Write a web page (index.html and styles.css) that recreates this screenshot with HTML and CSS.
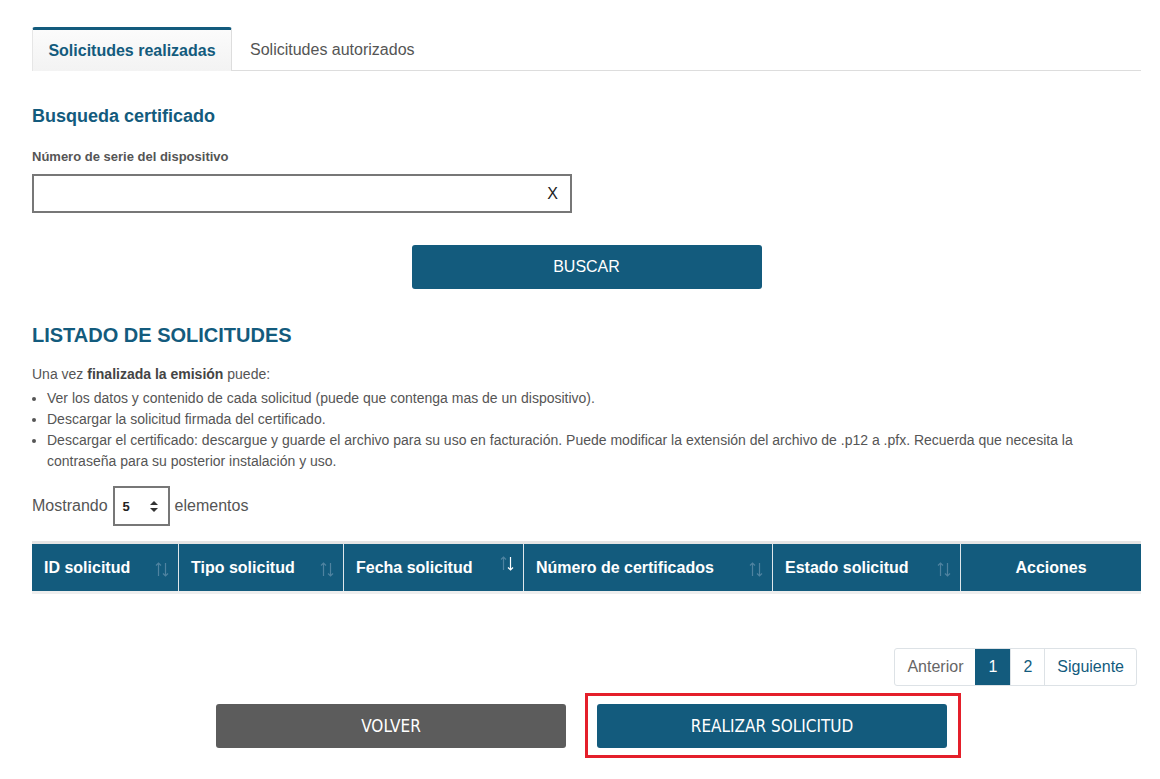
FILE: index.html
```html
<!DOCTYPE html>
<html lang="es">
<head>
<meta charset="utf-8">
<link rel="stylesheet" href="styles.css">
</head>
<body>
<div class="page">
  <div class="tabs">
    <div class="tab active">Solicitudes realizadas</div>
    <div class="tab">Solicitudes autorizados</div>
  </div>

  <h2 class="section-title">Busqueda certificado</h2>
  <label class="field-label">Número de serie del dispositivo</label>
  <div class="input-box"><span class="clear">X</span></div>

  <div class="center-row"><button class="btn btn-primary btn-search">BUSCAR</button></div>

  <h1 class="list-title">LISTADO DE SOLICITUDES</h1>
  <p class="intro">Una vez <b>finalizada la emisión</b> puede:</p>
  <ul class="info-list">
    <li>Ver los datos y contenido de cada solicitud (puede que contenga mas de un dispositivo).</li>
    <li>Descargar la solicitud firmada del certificado.</li>
    <li>Descargar el certificado: descargue y guarde el archivo para su uso en facturación. Puede modificar la extensión del archivo de .p12 a .pfx. Recuerda que necesita la contraseña para su posterior instalación y uso.</li>
  </ul>

  <div class="showing">
    <span>Mostrando</span>
    <div class="select"><span>5</span>
      <svg width="8" height="11" viewBox="0 0 8 11"><path d="M4 0 L8 4 H0 Z M0 7 H8 L4 11 Z" fill="#333"/></svg>
    </div>
    <span>elementos</span>
  </div>

  <div class="table">
    <div class="th c1">ID solicitud<svg class="sort" width="14" height="15" viewBox="0 0 14 15"><path class="up" d="M3.5 1 V14 M1 3.5 L3.5 1 L6 3.5"/><path class="dn" d="M10.5 1 V14 M8 11.5 L10.5 14 L13 11.5"/></svg></div>
    <div class="th c2">Tipo solicitud<svg class="sort" width="14" height="15" viewBox="0 0 14 15"><path class="up" d="M3.5 1 V14 M1 3.5 L3.5 1 L6 3.5"/><path class="dn" d="M10.5 1 V14 M8 11.5 L10.5 14 L13 11.5"/></svg></div>
    <div class="th c3">Fecha solicitud<svg class="sort sort-top" width="14" height="15" viewBox="0 0 14 15"><path class="up" d="M3.5 1 V14 M1 3.5 L3.5 1 L6 3.5"/><path class="dn on" d="M10.5 1 V14 M8 11.5 L10.5 14 L13 11.5"/></svg></div>
    <div class="th c4">Número de certificados<svg class="sort" width="14" height="15" viewBox="0 0 14 15"><path class="up" d="M3.5 1 V14 M1 3.5 L3.5 1 L6 3.5"/><path class="dn" d="M10.5 1 V14 M8 11.5 L10.5 14 L13 11.5"/></svg></div>
    <div class="th c5">Estado solicitud<svg class="sort" width="14" height="15" viewBox="0 0 14 15"><path class="up" d="M3.5 1 V14 M1 3.5 L3.5 1 L6 3.5"/><path class="dn" d="M10.5 1 V14 M8 11.5 L10.5 14 L13 11.5"/></svg></div>
    <div class="th c6 center">Acciones</div>
  </div>

  <div class="pager-row">
    <div class="pager">
      <span class="pg prev">Anterior</span>
      <span class="pg active">1</span>
      <span class="pg">2</span>
      <span class="pg">Siguiente</span>
    </div>
  </div>

  <div class="actions">
    <button class="btn btn-grey">VOLVER</button>
    <div class="highlight"><button class="btn btn-primary">REALIZAR SOLICITUD</button></div>
  </div>
</div>
</body>
</html>
```

FILE: styles.css
```css
* { box-sizing: border-box; }
html, body { margin: 0; padding: 0; background: #fff; }
body { font-family: "Liberation Sans", Arial, sans-serif; color: #555; }
.page { width: 1160px; padding: 27px 19px 0 32px; }

.tabs { display: flex; border-bottom: 1px solid #dddddd; height: 44px; }
.tab { padding: 0 18px; font-size: 16px; line-height: 45px; color: #555; }
.tab.active {
  width: 200px; padding: 0; text-align: center; line-height: 41px;
  border-top: 3px solid #135b7d; border-radius: 3px 3px 0 0;
  background: linear-gradient(#fbfbfb, #f3f3f3);
  border-left: 1px solid #e6e6e6; border-right: 1px solid #dddddd;
  margin-bottom: -1px; height: 44px;
  color: #135b7d; font-weight: bold;
}

.section-title { margin: 34px 0 0; font-size: 18px; line-height: 22px; color: #135b7d; font-weight: bold; }
.field-label { display: block; margin-top: 22px; font-size: 13px; font-weight: bold; color: #555; line-height: 16px; }
.input-box {
  margin-top: 9px; width: 540px; height: 39px; border: 2px solid #777;
  display: flex; align-items: center; justify-content: flex-end; padding-right: 12px;
}
.clear { font-size: 16px; color: #222; }

.center-row { display: flex; justify-content: center; margin-top: 32px; }
.btn {
  font-family: "Liberation Sans Narrow", "DejaVu Sans Condensed", "Liberation Sans", sans-serif;
  border: 0; border-radius: 3px; color: #fff; font-size: 17px; cursor: pointer;
  width: 350px; height: 44px;
}
.btn-primary { background: #135b7d; }
.btn-grey { background: #5c5c5c; }
.btn-search { font-family: "Liberation Sans", Arial, sans-serif; font-size: 16px; }

.list-title { margin: 34px 0 0; font-size: 20px; line-height: 24px; color: #135b7d; font-weight: bold; }
.intro { margin: 17px 0 0; font-size: 14px; line-height: 20px; }
.intro b { color: #444; }
.info-list { margin: 4px 0 0; padding-left: 15px; font-size: 14px; line-height: 21px; }

.showing { display: flex; align-items: center; gap: 5px; margin-top: 14px; font-size: 16px; color: #555; }
.select {
  width: 57px; height: 40px; border: 2px solid #777; display: flex; align-items: center;
  justify-content: space-between; padding: 0 10px 0 8px; font-size: 13px; font-weight: bold; color: #222;
}

.table {
  margin-top: 15px; display: grid; grid-template-columns: 146px 165px 180px 249px 188px 1fr;
  border-top: 3px solid #e5e5e5; border-bottom: 3px solid #eeeeee; background: #135b7d;
}
.th {
  position: relative; height: 47px; display: flex; align-items: center;
  padding-left: 12px; color: #fff; font-weight: bold; font-size: 16px;
  border-left: 1px solid #dfe7eb;
}
.th.c1 { border-left: 0; }
.th.center { justify-content: center; padding-left: 0; }
.sort { position: absolute; right: 9px; top: 18px; fill: none; stroke-width: 1.2; }
.sort .up, .sort .dn { stroke: #4f83a0; }
.sort .on { stroke: #ffffff; }
.sort-top { top: 12px; right: 9px; }

.pager-row { display: flex; justify-content: flex-end; margin-top: 54px; padding-right: 4px; }
.pager { display: flex; border: 1px solid #dde2e6; border-radius: 3px; height: 38px; }
.pg {
  display: flex; align-items: center; padding: 0 12px; font-size: 16px; color: #135b7d;
  border-left: 1px solid #dde2e6;
}
.pg.prev { border-left: 0; color: #666; padding: 0 12px; }
.pg.active { background: #135b7d; color: #fff; padding: 0 13px; border-left: 0; }

.actions { display: flex; justify-content: center; align-items: center; gap: 19px; margin-top: 7px; padding-left: 4px; }
.highlight { border: 3px solid #e41f2a; padding: 8px 11px 7px 9px; }
```
